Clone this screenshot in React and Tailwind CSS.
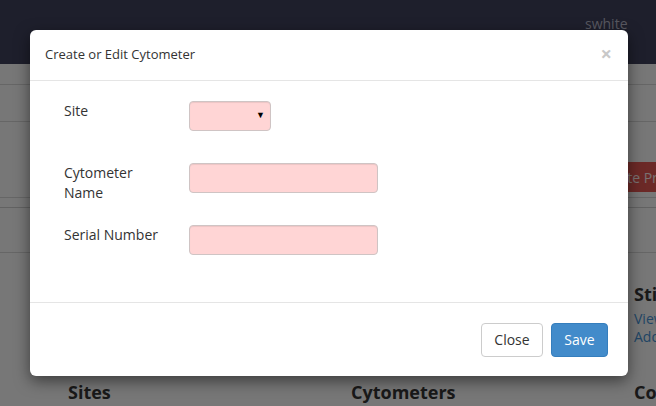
const Field = ({ label, width, select }) => (
  <div className="flex h-[62px] items-start">
    <label className="w-[125px] pr-4 text-[14px] leading-[20px] text-[#333]">{label}</label>
    <div
      className={`relative h-[30px] ${width} rounded-[4px] border border-[#cfc4c4] bg-[#ffd5d5] shadow-[inset_0_1px_1px_rgba(0,0,0,0.075)]`}
    >
      {select && (
        <span className="absolute right-[5px] top-[8px] text-[9px] leading-none text-black">▼</span>
      )}
    </div>
  </div>
);

export default function App() {
  return (
    <div className="relative h-[406px] w-[656px] overflow-hidden bg-[#eeeeee] font-['Open_Sans',sans-serif]">
      {/* Page behind the dialog */}
      <div className="flex h-[64px] items-start gap-[41px] whitespace-nowrap bg-[#3c3e58] pl-[585px] pt-[13px] text-[14px] text-[#b0b0c0]">
        <span>swhite</span>
        <span>Logout</span>
      </div>
      <div className="h-[21px] border-b border-[#cccccc]" />
      <div className="h-[37px] border-b border-[#cccccc]" />
      <div className="flex h-[76px] items-start border-b border-[#cccccc] pl-[585px] pt-[40px]">
        <div className="flex h-[30px] shrink-0 items-center whitespace-nowrap rounded-[4px] bg-[#d9534f] px-3 text-[14px] text-[#f2e2e2]">
          Create Project
        </div>
      </div>
      <div className="h-[10px] border-b border-[#c4c4c4]" />
      <div className="h-[45px] border-b border-[#cccccc]" />
      <div className="grid grid-cols-[283px_283px_283px] pl-[68px] pt-[28px]">
        {[
          ['Experiments', 'View Experiments', 'Add Experiment'],
          ['Projects', 'View Projects', 'Add Project'],
          ['Stimulations', 'View Stimulations', 'Add Stimulation'],
        ].map(([h, v, a]) => (
          <div key={h} className="h-[98px]">
            <h3 className="text-[18px] font-bold leading-[26px] text-[#333]">{h}</h3>
            <div className="mt-[3px] text-[14px] leading-[18px] text-[#428bca]">{v}</div>
            <div className="text-[14px] leading-[18px] text-[#428bca]">{a}</div>
          </div>
        ))}
        {['Sites', 'Cytometers', 'Compensation'].map((h) => (
          <h3 key={h} className="text-[18px] font-bold leading-[26px] text-[#333]">
            {h}
          </h3>
        ))}
      </div>

      {/* Backdrop */}
      <div className="absolute inset-0 bg-black/50" />

      {/* Dialog */}
      <div className="absolute left-[30px] top-[30px] flex h-[346px] w-[598px] flex-col rounded-[6px] bg-white shadow-[0_5px_15px_rgba(0,0,0,0.5)]">
        <div className="flex h-[51px] items-center justify-between border-b border-[#e5e5e5] pl-[15px] pr-[16px]">
          <h4 className="text-[13px] text-[#333]">Create or Edit Cytometer</h4>
          <button className="-mt-[3px] text-[20px] font-bold leading-none text-[#c8c8c8]">×</button>
        </div>
        <div className="flex-1 pl-[34px] pt-[20px]">
          <Field label="Site" width="w-[82px]" select />
          <Field label="Cytometer Name" width="w-[189px]" />
          <Field label="Serial Number" width="w-[189px]" />
        </div>
        <div className="flex h-[74px] items-center justify-end gap-[8px] border-t border-[#e5e5e5] pr-[20px]">
          <button className="h-[34px] w-[62px] rounded-[4px] border border-[#cccccc] bg-white text-[14px] text-[#333]">
            Close
          </button>
          <button className="h-[34px] w-[57px] rounded-[4px] border border-[#357ebd] bg-[#428bca] text-[14px] text-white">
            Save
          </button>
        </div>
      </div>
    </div>
  );
}
